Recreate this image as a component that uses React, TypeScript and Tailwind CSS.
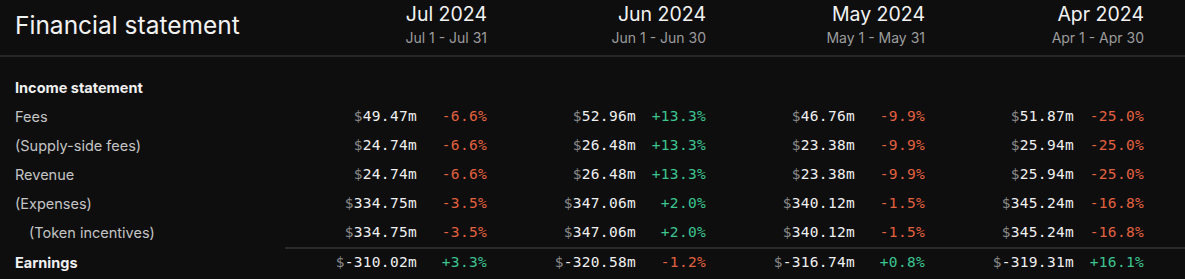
const months = [
  { name: 'Jul 2024', range: 'Jul 1 - Jul 31' },
  { name: 'Jun 2024', range: 'Jun 1 - Jun 30' },
  { name: 'May 2024', range: 'May 1 - May 31' },
  { name: 'Apr 2024', range: 'Apr 1 - Apr 30' },
];

type Cell = [string, string];

interface Row {
  label: string;
  indent?: boolean;
  cells: Cell[];
}

const rows: Row[] = [
  { label: 'Fees', cells: [['49.47m', '-6.6%'], ['52.96m', '+13.3%'], ['46.76m', '-9.9%'], ['51.87m', '-25.0%']] },
  { label: '(Supply-side fees)', cells: [['24.74m', '-6.6%'], ['26.48m', '+13.3%'], ['23.38m', '-9.9%'], ['25.94m', '-25.0%']] },
  { label: 'Revenue', cells: [['24.74m', '-6.6%'], ['26.48m', '+13.3%'], ['23.38m', '-9.9%'], ['25.94m', '-25.0%']] },
  { label: '(Expenses)', cells: [['334.75m', '-3.5%'], ['347.06m', '+2.0%'], ['340.12m', '-1.5%'], ['345.24m', '-16.8%']] },
  { label: '(Token incentives)', indent: true, cells: [['334.75m', '-3.5%'], ['347.06m', '+2.0%'], ['340.12m', '-1.5%'], ['345.24m', '-16.8%']] },
];

const earnings: Cell[] = [['-310.02m', '+3.3%'], ['-320.58m', '-1.2%'], ['-316.74m', '+0.8%'], ['-319.31m', '+16.1%']];

const sans = "font-['Inter','Liberation_Sans',sans-serif]";
const mono = "font-['DejaVu_Sans_Mono','Liberation_Mono',monospace]";

function ValueCell({ value, pct }: { value: string; pct: string }) {
  const up = pct.startsWith('+');
  return (
    <div className={`flex items-center justify-end ${mono} text-[14.5px] tracking-[0.3px]`}>
      <span className="text-[#f0f0f0]">
        <span className="text-[#8a8a8a]">$</span>
        {value}
      </span>
      <span className={`w-[70px] text-right ${up ? 'text-[#3cc58f]' : 'text-[#e2613f]'}`}>{pct}</span>
    </div>
  );
}

export default function App() {
  return (
    <div className={`w-[1185px] h-[279px] overflow-hidden bg-[#0e0e0f] ${sans}`}>
      {/* Header */}
      <div className="grid grid-cols-[268px_repeat(4,219px)] h-[57px] border-b-2 border-[#27272a]">
        <div className="pl-[15px] pt-[7px] text-[24.5px] text-[#f2f2f2]">Financial statement</div>
        {months.map((m) => (
          <div key={m.name} className="flex flex-col items-end pt-[2px]">
            <div className="text-[19.5px] leading-[25px] text-[#f2f2f2]">{m.name}</div>
            <div className="text-[14px] leading-[22px] text-[#9c9c9c]">{m.range}</div>
          </div>
        ))}
      </div>

      {/* Body */}
      <div className="pt-[16px]">
        <div className="h-[29px] flex items-center pl-[15px] text-[14.5px] font-bold text-[#f0f0f0]">Income statement</div>
        {rows.map((r, i) => (
          <div key={i} className="grid grid-cols-[268px_repeat(4,219px)] h-[29px] items-center">
            <div className={`text-[14.5px] text-[#c4c4c4] ${r.indent ? 'pl-[29px]' : 'pl-[15px]'}`}>{r.label}</div>
            {r.cells.map((c, j) => (
              <ValueCell key={j} value={c[0]} pct={c[1]} />
            ))}
          </div>
        ))}
        <div className="ml-[285px] h-[2px] bg-[#2a2a2d]" />
        <div className="grid grid-cols-[268px_repeat(4,219px)] h-[28px] items-center">
          <div className="pl-[15px] text-[14.5px] font-bold text-[#f0f0f0]">Earnings</div>
          {earnings.map((c, j) => (
            <ValueCell key={j} value={c[0]} pct={c[1]} />
          ))}
        </div>
      </div>
    </div>
  );
}
